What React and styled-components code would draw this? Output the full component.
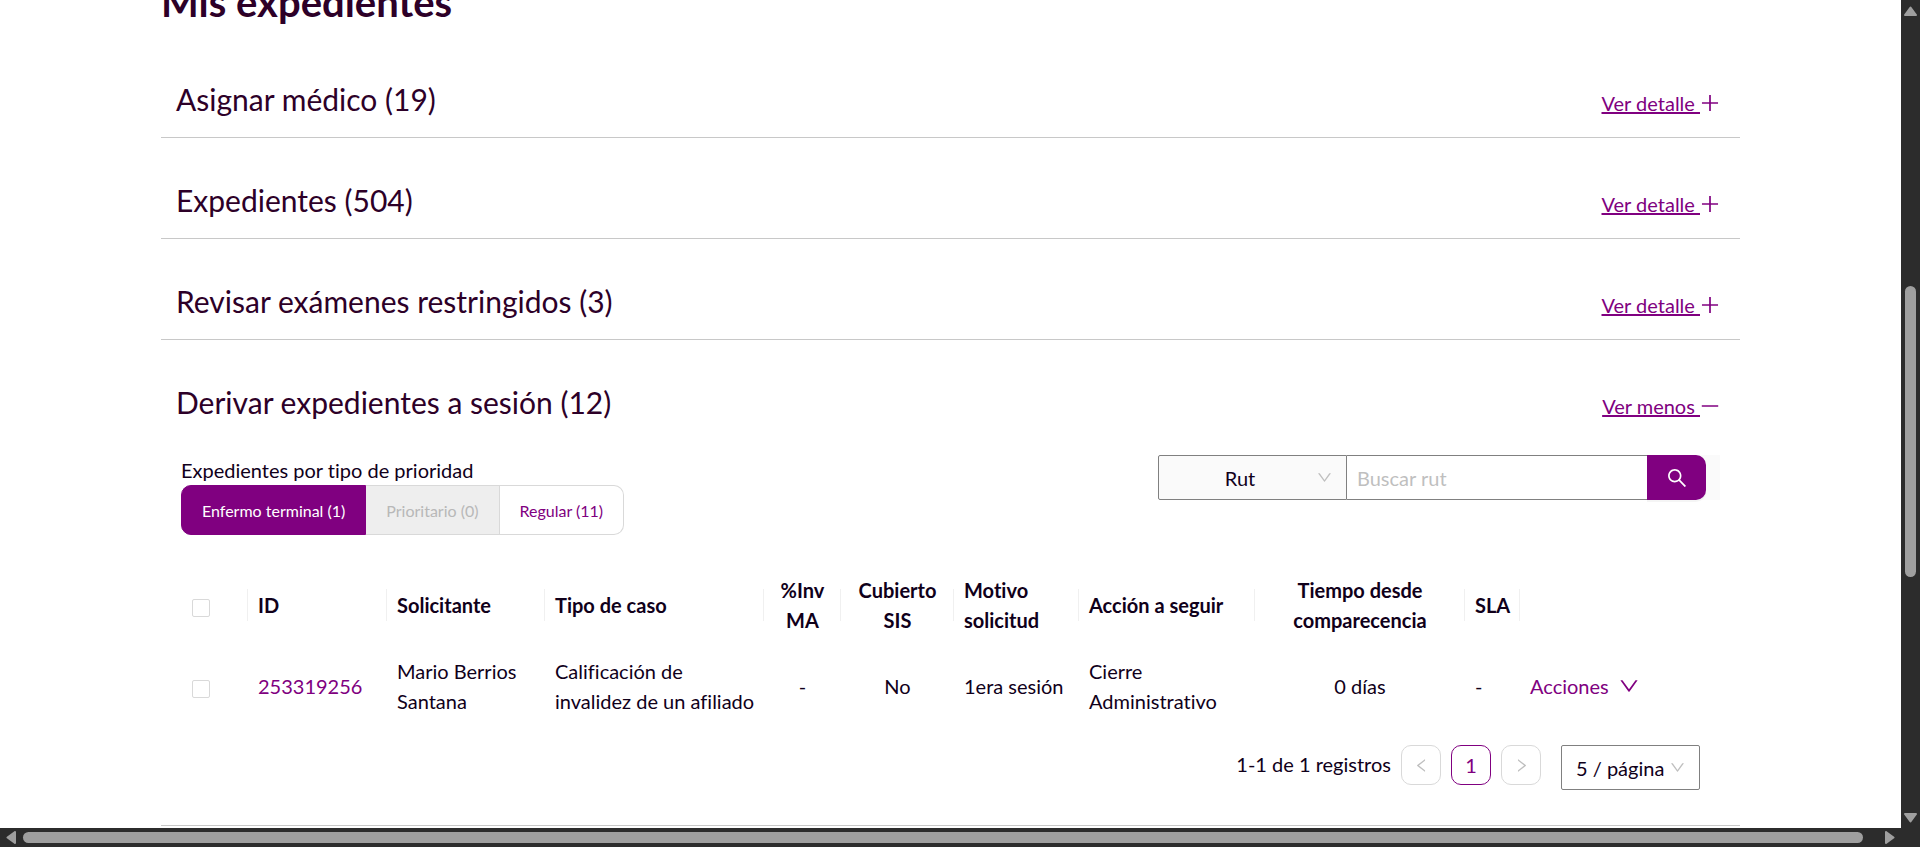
import React, { useState } from "react";
import styled, { createGlobalStyle, css } from "styled-components";

const purple = "#800080";

const GlobalStyle = createGlobalStyle`
  *, *::before, *::after { box-sizing: border-box; }
  body { margin: 0; background: #fff; font-variant-ligatures: none; }
  body, button, input, select { font-family: Lato, "Open Sans", sans-serif; }
`;

const Viewport = styled.div`
  display: grid;
  grid-template-columns: minmax(0, 1fr) 19px;
  grid-template-rows: minmax(0, 1fr) 19px;
  height: 100vh;
  background: #2c2c2c;
  color: #10001a;
  font-size: 20px;
  line-height: 30px;
`;

const Page = styled.main`
  overflow: hidden;
  background: #fff;
  padding: 0 161px;
`;

const Title = styled.h1`
  margin: -25px 0 8px;
  color: #2d0028;
  font-size: 40px;
  font-weight: 700;
  line-height: 54px;
`;

const Panel = styled.section`
  border-bottom: 1px solid #c8c8c8;
`;

const PanelHeader = styled.header`
  display: flex;
  align-items: baseline;
  justify-content: space-between;
  padding: 38px 20px 14px 15px;
`;

const PanelTitle = styled.h2`
  margin: 0;
  color: #2d0028;
  font-size: 30px;
  font-weight: 400;
  line-height: 48px;
`;

const Toggle = styled.button`
  display: flex;
  align-items: center;
  padding: 0;
  border: 0;
  background: none;
  color: ${purple};
  font-size: 20px;
  line-height: 30px;
  cursor: pointer;
`;

const ToggleText = styled.span`
  white-space: pre;
  text-decoration: underline;
`;

const Svg = styled.svg`
  display: block;
  flex: none;
  width: ${(p) => p.$size}px;
  height: ${(p) => p.$size}px;
  fill: currentColor;
`;

const PanelBody = styled.div`
  padding: 15px 20px 35px;
`;

const Filters = styled.div`
  display: flex;
  align-items: flex-start;
  justify-content: space-between;
  margin-bottom: 30px;
`;

const Segments = styled.div`
  display: flex;
`;

const Segment = styled.button`
  height: 50px;
  padding: 0 20px;
  border: 1px solid #d9d9d9;
  border-left-width: 0;
  background: #fff;
  color: ${purple};
  font-size: 16px;
  cursor: pointer;

  &:first-child { border-left-width: 1px; border-radius: 10px 0 0 10px; }
  &:last-child { border-radius: 0 10px 10px 0; }
  &:disabled { background: #eee; color: #b8b8b8; cursor: default; }
  ${(p) => p.$active && css`
    border-color: ${purple};
    background: ${purple};
    color: #fff;
  `}
`;

const Search = styled.form`
  display: flex;
  height: 45px;
  padding-right: 14px;
  background: linear-gradient(to left, #fafafa 20px, #fff 20px);
`;

const SelectBox = styled.span`
  display: grid;
  align-items: center;
  width: ${(p) => p.$width}px;
  height: 45px;

  > * { grid-area: 1 / 1; }
  > svg {
    justify-self: end;
    margin-right: 15px;
    color: #bfbfbf;
    pointer-events: none;
  }
`;

const Select = styled.select`
  appearance: none;
  width: 100%;
  height: 100%;
  border: 1px solid #808080;
  border-radius: ${(p) => (p.$joined ? "2px 0 0 2px" : "2px")};
  padding: ${(p) => (p.$joined ? "0 25px 0 0" : "0 0 0 14px")};
  background: ${(p) => (p.$joined ? "#fafafa" : "#fff")};
  color: #10001a;
  font-size: 20px;
  text-align-last: ${(p) => (p.$joined ? "center" : "left")};
`;

const SearchInput = styled.input`
  width: 300px;
  padding: 0 10px;
  border: 1px solid #808080;
  border-width: 1px 0;
  background: #fff;
  color: #10001a;
  font-size: 20px;
  outline: none;

  &::placeholder { color: #bfbfbf; }
`;

const SearchButton = styled.button`
  display: flex;
  align-items: center;
  justify-content: center;
  width: 59px;
  border: 0;
  border-radius: 0 10px 10px 0;
  background: ${purple};
  box-shadow: 0 2px 0 rgba(0, 0, 0, 0.04);
  color: #fff;
  cursor: pointer;
`;

const Table = styled.table`
  width: 100%;
  table-layout: fixed;
  border-collapse: separate;
  border-spacing: 0;
`;

const Col = styled.col`
  width: ${(p) => (p.$width ? `${p.$width}px` : "auto")};
`;

const cell = css`
  height: 80px;
  padding: 10px 0 10px 10px;
  text-align: left;
  vertical-align: middle;
  ${(p) => p.$center && css`
    padding-right: 10px;
    text-align: center;
  `}
`;

const HeadCell = styled.th`
  ${cell}
  font-weight: 700;
  background: ${(p) => (p.$plain ? "none" : "linear-gradient(#f0f0f0, #f0f0f0) right center / 1px 32px no-repeat")};
`;

const Cell = styled.td`
  ${cell}
  height: 82px;
`;

const Checkbox = styled.input`
  appearance: none;
  display: block;
  width: 18px;
  height: 18px;
  margin: 6px 0 0 1px;
  border: 1px solid #d9d9d9;
  border-radius: 2px;
  background: #fff;

  &:checked { border-color: ${purple}; background: ${purple}; }
`;

const RecordLink = styled.a`
  color: ${purple};
  text-decoration: none;
`;

const ActionsButton = styled.button`
  display: flex;
  align-items: center;
  gap: 10px;
  padding: 0;
  border: 0;
  background: none;
  color: ${purple};
  font-size: 20px;
  line-height: 30px;
  cursor: pointer;
`;

const Pagination = styled.nav`
  display: flex;
  align-items: flex-start;
  justify-content: flex-end;
  gap: 10px;
  padding: 18px 20px 0 0;
`;

const Total = styled.span`
  line-height: 38px;
`;

const PageButton = styled.button`
  display: flex;
  align-items: center;
  justify-content: center;
  width: 40px;
  height: 40px;
  padding: 0;
  border: 1px solid #d9d9d9;
  border-radius: 10px;
  background: #fff;
  color: ${purple};
  font-size: 20px;

  &:disabled { color: #bfbfbf; }
  &[aria-current] { border-color: ${purple}; }
  &:nth-of-type(3) { margin-right: 10px; }
`;

const Track = styled.div`
  display: flex;
  flex-direction: ${(p) => (p.$vertical ? "column" : "row")};
  align-items: center;
  justify-content: space-between;
  padding: ${(p) => (p.$vertical ? "6px 0 5px" : "0 6px")};
  color: #9f9f9f;
`;

const ThumbLane = styled.div`
  display: flex;
  flex: 1;
  flex-direction: ${(p) => (p.$vertical ? "column" : "row")};
  margin: ${(p) => (p.$vertical ? "8px 0" : "0 22px 0 7px")};
`;

const Spacer = styled.div`
  flex: ${(p) => p.$grow};
`;

const Thumb = styled.div`
  flex: ${(p) => p.$grow};
  min-width: 11px;
  min-height: 11px;
  border-radius: 6px;
  background: #9f9f9f;
`;

const Arrow = styled.svg`
  display: block;
  flex: none;
  fill: currentColor;
  stroke: currentColor;
  stroke-width: 2;
  stroke-linejoin: round;
`;

const paths = {
  plus: ["M482 152h60q8 0 8 8v704q0 8-8 8h-60q-8 0-8-8V160q0-8 8-8z", "M160 474h704q8 0 8 8v60q0 8-8 8H160q-8 0-8-8v-60q0-8 8-8z"],
  minus: ["M872 474H152c-4.4 0-8 3.6-8 8v60c0 4.4 3.6 8 8 8h720c4.4 0 8-3.6 8-8v-60c0-4.4-3.6-8-8-8z"],
  down: ["M884 256h-75c-5.1 0-9.9 2.5-12.9 6.6L512 654.2 227.9 262.6c-3-4.1-7.8-6.6-12.9-6.6h-75c-6.5 0-10.3 7.4-6.5 12.7l352.6 486.1c12.8 17.6 39 17.6 51.7 0l352.6-486.1c3.9-5.3.1-12.7-6.4-12.7z"],
  left: ["M724 218.3V141c0-6.7-7.7-10.4-12.9-6.3L260.3 486.8a31.86 31.86 0 000 50.3l450.8 352.1c5.3 4.1 12.9.4 12.9-6.3v-77.3c0-4.9-2.3-9.6-6.1-12.6l-360-281 360-281.1c3.8-3 6.1-7.7 6.1-12.6z"],
  right: ["M765.7 486.8L314.9 134.7A7.97 7.97 0 00302 141v77.3c0 4.9 2.3 9.6 6.1 12.6l360 281.1-360 281.1c-3.9 3-6.1 7.7-6.1 12.6V883c0 6.7 7.7 10.4 12.9 6.3l450.8-352.1a31.96 31.96 0 000-50.4z"],
  search: ["M909.6 854.5L649.9 594.8C690.2 542.7 712 479 712 412c0-80.2-31.3-155.4-87.9-212.1-56.6-56.7-132-87.9-212.1-87.9s-155.5 31.3-212.1 87.9C143.2 256.5 112 331.8 112 412c0 80.1 31.3 155.5 87.9 212.1C256.5 680.8 331.8 712 412 712c67 0 130.6-21.8 182.7-62l259.7 259.6a8.2 8.2 0 0011.6 0l43.6-43.5a8.2 8.2 0 000-11.6zM570.4 570.4C528 612.7 471.8 636 412 636s-116-23.3-158.4-65.6C211.3 528 188 471.8 188 412s23.3-116.1 65.6-158.4C296 211.3 352.2 188 412 188s116.1 23.2 158.4 65.6S636 352.2 636 412s-23.3 116.1-65.6 158.4z"],
};

function Icon({ name, size = 20 }) {
  return (
    <Svg viewBox="64 64 896 896" $size={size} aria-hidden="true">
      {paths[name].map((d) => <path key={d} d={d} />)}
    </Svg>
  );
}

function PanelHead({ title, open }) {
  return (
    <PanelHeader>
      <PanelTitle>{title}</PanelTitle>
      <Toggle type="button" aria-expanded={!!open}>
        <ToggleText>{open ? "Ver menos " : "Ver detalle "}</ToggleText>
        <Icon name={open ? "minus" : "plus"} />
      </Toggle>
    </PanelHeader>
  );
}

const columns = [
  { label: "ID", width: 139 },
  { label: "Solicitante", width: 158 },
  { label: "Tipo de caso", width: 219 },
  { label: "%Inv MA", width: 77, center: true },
  { label: "Cubierto SIS", width: 113, center: true },
  { label: "Motivo solicitud", width: 125 },
  { label: "Acción a seguir", width: 176 },
  { label: "Tiempo desde comparecencia", width: 210, center: true },
  { label: "SLA", width: 55 },
];

const closedPanels = ["Asignar médico (19)", "Expedientes (504)", "Revisar exámenes restringidos (3)"];

export default function App() {
  const [priority, setPriority] = useState("terminal");
  return (
    <>
      <GlobalStyle />
      <Viewport>
        <Page>
          <Title>Mis expedientes</Title>
          {closedPanels.map((title) => (
            <Panel key={title}><PanelHead title={title} /></Panel>
          ))}
          <Panel>
            <PanelHead title="Derivar expedientes a sesión (12)" open />
            <PanelBody>
              <Filters>
                <div>
                  <div id="priority-label">Expedientes por tipo de prioridad</div>
                  <Segments role="group" aria-labelledby="priority-label">
                    <Segment type="button" $active={priority === "terminal"} onClick={() => setPriority("terminal")}>
                      Enfermo terminal (1)
                    </Segment>
                    <Segment type="button" disabled>Prioritario (0)</Segment>
                    <Segment type="button" $active={priority === "regular"} onClick={() => setPriority("regular")}>
                      Regular (11)
                    </Segment>
                  </Segments>
                </div>
                <Search role="search" onSubmit={(e) => e.preventDefault()}>
                  <SelectBox $width={189}>
                    <Select $joined aria-label="Buscar por"><option>Rut</option></Select>
                    <Icon name="down" size={15} />
                  </SelectBox>
                  <SearchInput type="text" placeholder="Buscar rut" aria-label="Buscar rut" />
                  <SearchButton type="submit" aria-label="Buscar"><Icon name="search" /></SearchButton>
                </Search>
              </Filters>
              <Table>
                <colgroup>
                  <Col $width={67} />
                  {columns.map((c) => <Col key={c.label} $width={c.width} />)}
                  <Col />
                </colgroup>
                <thead>
                  <tr>
                    <HeadCell><Checkbox type="checkbox" aria-label="Seleccionar todos" /></HeadCell>
                    {columns.map((c) => <HeadCell key={c.label} $center={c.center}>{c.label}</HeadCell>)}
                    <HeadCell $plain aria-label="Acciones" />
                  </tr>
                </thead>
                <tbody>
                  <tr>
                    <Cell><Checkbox type="checkbox" aria-label="Seleccionar 253319256" /></Cell>
                    <Cell><RecordLink href="#253319256">253319256</RecordLink></Cell>
                    <Cell>Mario Berrios Santana</Cell>
                    <Cell>Calificación de invalidez de un afiliado</Cell>
                    <Cell $center>-</Cell>
                    <Cell $center>No</Cell>
                    <Cell>1era sesión</Cell>
                    <Cell>Cierre Administrativo</Cell>
                    <Cell $center>0 días</Cell>
                    <Cell>-</Cell>
                    <Cell>
                      <ActionsButton type="button">Acciones<Icon name="down" /></ActionsButton>
                    </Cell>
                  </tr>
                </tbody>
              </Table>
              <Pagination aria-label="Paginación">
                <Total>1-1 de 1 registros</Total>
                <PageButton type="button" disabled aria-label="Anterior"><Icon name="left" size={15} /></PageButton>
                <PageButton type="button" aria-current="page">1</PageButton>
                <PageButton type="button" disabled aria-label="Siguiente"><Icon name="right" size={15} /></PageButton>
                <SelectBox $width={139}>
                  <Select aria-label="Registros por página"><option>5 / página</option></Select>
                  <Icon name="down" size={15} />
                </SelectBox>
              </Pagination>
            </PanelBody>
          </Panel>
        </Page>
        <Track $vertical aria-hidden="true">
          <Arrow width="13" height="10" viewBox="0 0 13 10"><path d="M6.5 1.5 12 9H1z" /></Arrow>
          <ThumbLane $vertical>
            <Spacer $grow={262} />
            <Thumb $grow={291} />
            <Spacer $grow={228} />
          </ThumbLane>
          <Arrow width="13" height="10" viewBox="0 0 13 10"><path d="M6.5 8.5 12 1H1z" /></Arrow>
        </Track>
        <Track aria-hidden="true">
          <Arrow width="10" height="13" viewBox="0 0 10 13"><path d="M1.5 6.5 9 1v11z" /></Arrow>
          <ThumbLane><Thumb $grow={1} /></ThumbLane>
          <Arrow width="10" height="13" viewBox="0 0 10 13"><path d="M8.5 6.5 1 1v11z" /></Arrow>
        </Track>
      </Viewport>
    </>
  );
}
